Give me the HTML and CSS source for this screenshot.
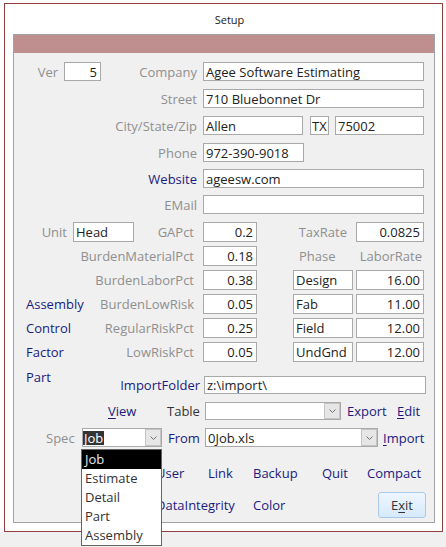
FILE: index.html
```html
<!DOCTYPE html>
<html>
<head>
<meta charset="utf-8">
<title>Setup</title>
<link rel="stylesheet" href="styles.css">
</head>
<body>
<div class="window">
  <div class="frame">
    <div class="title">Setup</div>
    <div class="panel">
      <div class="band"></div>

      <div class="row r1">
        <div class="lbl w-ver">Ver</div>
        <div class="box num ml6 f-ver">5</div>
        <div class="lbl w-company">Company</div>
        <div class="box ml6 f-wide">Agee Software Estimating</div>
      </div>
      <div class="row r2">
        <div class="lbl w-addr">Street</div>
        <div class="box ml6 f-wide">710 Bluebonnet Dr</div>
      </div>
      <div class="row r3">
        <div class="lbl w-addr">City/State/Zip</div>
        <div class="box ml6 f-city">Allen</div>
        <div class="box f-state">TX</div>
        <div class="box ml6 f-zip">75002</div>
      </div>
      <div class="row r4">
        <div class="lbl w-addr">Phone</div>
        <div class="box ml6 f-phone">972-390-9018</div>
      </div>
      <div class="row r5">
        <div class="lbl nav w-addr">Website</div>
        <div class="box ml6 f-wide">ageesw.com</div>
      </div>
      <div class="row r6">
        <div class="lbl w-addr">EMail</div>
        <div class="box ml6 f-wide"></div>
      </div>

      <div class="row g1">
        <div class="lbl w-unit">Unit</div>
        <div class="box ml6 f-unit">Head</div>
        <div class="lbl w-gapct">GAPct</div>
        <div class="box num ml9 f-pct">0.2</div>
        <div class="lbl w-tax">TaxRate</div>
        <div class="box num ml9 f-rate">0.0825</div>
      </div>
      <div class="row g">
        <div class="lbl w-pctlbl">BurdenMaterialPct</div>
        <div class="box num ml9 f-pct">0.18</div>
        <div class="lbl phase-h">Phase</div>
        <div class="lbl rate-h">LaborRate</div>
      </div>
      <div class="row g">
        <div class="lbl w-pctlbl">BurdenLaborPct</div>
        <div class="box num ml9 f-pct">0.38</div>
        <div class="box ml36 f-phase">Design</div>
        <div class="box num ml3 f-rate">16.00</div>
      </div>
      <div class="row g">
        <div class="side nav">Assembly</div>
        <div class="lbl w-pctlbl2">BurdenLowRisk</div>
        <div class="box num ml9 f-pct">0.05</div>
        <div class="box ml36 f-phase">Fab</div>
        <div class="box num ml3 f-rate">11.00</div>
      </div>
      <div class="row g">
        <div class="side nav">Control</div>
        <div class="lbl w-pctlbl2">RegularRiskPct</div>
        <div class="box num ml9 f-pct">0.25</div>
        <div class="box ml36 f-phase">Field</div>
        <div class="box num ml3 f-rate">12.00</div>
      </div>
      <div class="row g">
        <div class="side nav">Factor</div>
        <div class="lbl w-pctlbl2">LowRiskPct</div>
        <div class="box num ml9 f-pct">0.05</div>
        <div class="box ml36 f-phase">UndGnd</div>
        <div class="box num ml3 f-rate">12.00</div>
      </div>

      <div class="row g7">
        <div class="side nav part">Part</div>
        <div class="lbl nav w-import">ImportFolder</div>
        <div class="box ml4 f-folder">z:\import\</div>
      </div>

      <div class="row trow">
        <div class="cell nav c-view"><u>V</u>iew</div>
        <div class="cell dark c-table">Table</div>
        <div class="combo f-table">
          <div class="val"></div>
          <div class="btn"><svg width="7" height="4" viewBox="0 0 7 4"><path d="M0.5 0.5 L3.5 3.5 L6.5 0.5" fill="none" stroke="#707070" stroke-width="1"/></svg></div>
        </div>
        <div class="cell nav c-export">Export</div>
        <div class="cell nav"><u>E</u>dit</div>
      </div>

      <div class="row srow">
        <div class="cell gray c-spec">Spec</div>
        <div class="combo f-spec">
          <div class="val"><span class="sel">Job</span></div>
          <div class="btn"><svg width="7" height="4" viewBox="0 0 7 4"><path d="M0.5 0.5 L3.5 3.5 L6.5 0.5" fill="none" stroke="#707070" stroke-width="1"/></svg></div>
          <ul class="dropdown">
            <li class="on">Job</li>
            <li>Estimate</li>
            <li>Detail</li>
            <li>Part</li>
            <li>Assembly</li>
          </ul>
        </div>
        <div class="cell nav c-from">From</div>
        <div class="combo f-from">
          <div class="val">0Job.xls</div>
          <div class="btn"><svg width="7" height="4" viewBox="0 0 7 4"><path d="M0.5 0.5 L3.5 3.5 L6.5 0.5" fill="none" stroke="#707070" stroke-width="1"/></svg></div>
        </div>
        <div class="cell nav c-import"><u>I</u>mport</div>
      </div>

      <div class="row l1">
        <div class="cell nav c-user">User</div>
        <div class="cell nav c-link">Link</div>
        <div class="cell nav c-backup">Backup</div>
        <div class="cell nav c-quit">Quit</div>
        <div class="cell nav">Compact</div>
      </div>
      <div class="row l2">
        <div class="cell nav c-integrity">DataIntegrity</div>
        <div class="cell nav c-color">Color</div>
        <div class="exit">E<u>x</u>it</div>
      </div>
    </div>
  </div>
</div>
</body>
</html>
```

FILE: styles.css
```css
html { background: #f0f0f0; }
body {
  margin: 0;
  font-family: "Open Sans", "Segoe UI", "DejaVu Sans", sans-serif;
  font-size: 13px;
  color: #222;
}
.window {
  height: 547px;
  padding: 3px 3px 0 4px;
  box-sizing: border-box;
  background: linear-gradient(#fff 0, #fff 532px, #f0f0f0 532px);
}
.frame {
  width: 439px;
  height: 529px;
  box-sizing: border-box;
  border: 1px solid #913f3f;
  padding: 0 7px 0 8px;
}
.title {
  height: 30px;
  line-height: 31px;
  text-align: center;
  font-size: 11px;
  color: #222;
  padding-left: 11px;
}
.panel {
  position: relative;
  height: 489px;
  box-sizing: border-box;
  border: 1px solid #a3a3a3;
  background: #f0f0f0;
}
.band { height: 18px; background: #bf8f8f; }

.row { display: flex; align-items: center; }
.r1 { margin-top: 9px; height: 19px; }
.r2, .r3 { margin-top: 8px; height: 19px; }
.r4 { margin-top: 8px; height: 19px; }
.r5, .r6 { margin-top: 7px; height: 19px; }
.g1 { margin-top: 8px; height: 20px; }
.g { margin-top: 4px; height: 20px; }
.g7 { margin-top: 6px; height: 26px; align-items: flex-end; }
.trow { margin-top: 8px; height: 18px; }
.srow { margin-top: 8px; height: 19px; }
.l1 { margin-top: 17px; height: 18px; }
.l2 { margin-top: 10px; height: 26px; }

.lbl {
  flex: none;
  display: flex;
  justify-content: flex-end;
  white-space: nowrap;
  color: #8f8f8f;
  box-sizing: border-box;
}
.nav { color: #1b1b80; }
.gray { color: #8f8f8f; }
.dark { color: #333; }
.cell { flex: none; white-space: nowrap; box-sizing: border-box; }
.cell u, .exit u { text-decoration: underline; text-underline-offset: 2px; }

.box {
  flex: none;
  height: 100%;
  box-sizing: border-box;
  background: #fff;
  border: 1px solid #a9a9a9;
  padding: 0 2px;
  white-space: nowrap;
  overflow: hidden;
  display: flex;
  align-items: center;
  color: #222;
}
.num { justify-content: flex-end; padding-right: 3px; }

.ml3 { margin-left: 3px; }
.ml4 { margin-left: 4px; }
.ml6 { margin-left: 6px; }
.ml9 { margin-left: 9px; }
.ml36 { margin-left: 36px; }

.w-ver { width: 44px; }
.w-company { width: 96px; }
.w-addr { width: 183px; }
.f-ver { width: 37px; }
.f-wide { width: 221px; }
.f-city { width: 100px; }
.f-state { width: 19px; margin-left: 7px; padding: 0 1px; }
.f-zip { width: 89px; }
.f-phone { width: 101px; }

.w-unit { width: 53px; }
.f-unit { width: 61px; }
.w-gapct { width: 60px; }
.f-pct { width: 54px; }
.w-tax { width: 90px; }
.f-rate { width: 68px; }
.w-pctlbl { width: 180px; }
.w-pctlbl2 { width: 99px; }
.phase-h { width: 99px; justify-content: flex-start; padding-left: 42px; }
.rate-h { width: 68px; padding-right: 2px; }
.f-phase { width: 60px; }
.side { flex: none; width: 81px; padding-left: 12px; box-sizing: border-box; white-space: nowrap; }
.part { align-self: flex-start; line-height: 18px; }
.w-import { width: 105px; height: 18px; align-items: center; }
.f-folder { width: 222px; height: 18px; }

.c-view { margin-left: 94px; width: 59px; }
.c-table { width: 38px; }
.c-export { width: 56px; padding-left: 6px; }
.c-spec { margin-left: 32px; width: 36px; }
.c-from { width: 43px; padding-left: 6px; }
.c-import { padding-left: 5px; }

.combo {
  flex: none;
  position: relative;
  height: 100%;
  box-sizing: border-box;
  display: flex;
  background: #fff;
  border: 1px solid #a9a9a9;
}
.combo .val {
  flex: 1;
  display: flex;
  align-items: center;
  padding-left: 2px;
  white-space: nowrap;
  overflow: hidden;
  color: #222;
}
.combo .btn {
  flex: none;
  width: 16px;
  box-sizing: border-box;
  background: #e6e6e6;
  border: 1px solid #c4c4c4;
  display: flex;
  align-items: center;
  justify-content: center;
}
.f-table { width: 136px; }
.f-spec { width: 80px; }
.f-from { width: 173px; }
.f-spec .val { padding-left: 0; }
.sel {
  background: #333;
  color: #fff;
  line-height: 14px;
  padding: 0 1px 0 1px;
}
.dropdown {
  position: absolute;
  left: -2px;
  top: 20px;
  width: 81px;
  height: 97px;
  box-sizing: border-box;
  margin: 0;
  padding: 0;
  list-style: none;
  background: #fff;
  border: 1px solid #646464;
  z-index: 5;
}
.dropdown li {
  height: 19px;
  line-height: 19px;
  padding-left: 3px;
  color: #333;
}
.dropdown li.on { background: #000; color: #e8e8e8; }

.c-user { margin-left: 142px; width: 52px; }
.c-link { width: 45px; }
.c-backup { width: 69px; }
.c-quit { width: 45px; }
.c-integrity { margin-left: 142px; width: 97px; }
.c-color { width: 125px; }

.exit {
  flex: none;
  width: 48px;
  height: 26px;
  box-sizing: border-box;
  border: 1px solid #a8c9ec;
  border-radius: 3px;
  background: linear-gradient(#eef6fe, #d6e9fb);
  display: flex;
  align-items: center;
  justify-content: center;
  color: #333;
}
```
